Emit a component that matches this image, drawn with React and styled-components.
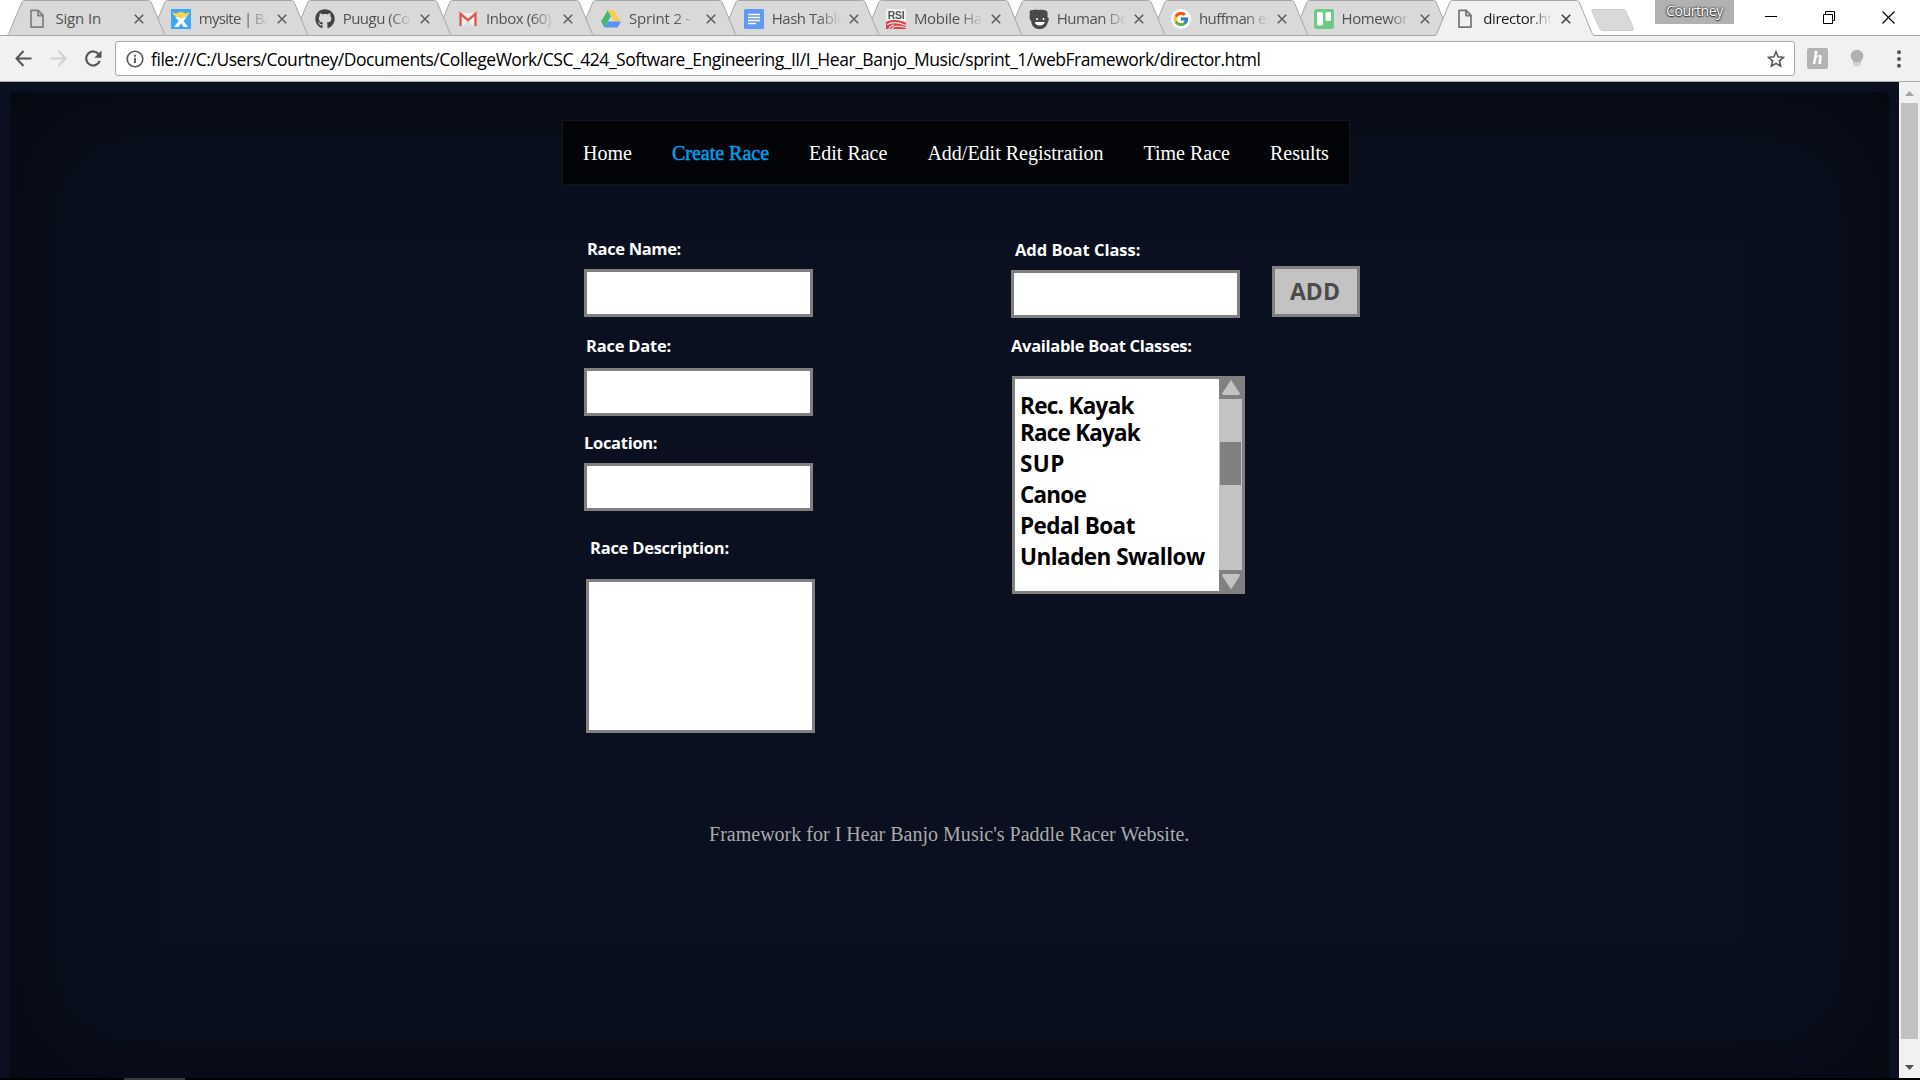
import React from 'react';
import styled, { createGlobalStyle, css } from 'styled-components';
import { FcGoogle } from 'react-icons/fc';
import { FaGithub } from 'react-icons/fa';

const ui = '"Open Sans", "Noto Sans", sans-serif';
const serif = '"Liberation Serif", "Times New Roman", serif';

const GlobalStyle = createGlobalStyle`
  *, *::before, *::after { box-sizing: border-box; }
  body { margin: 0; overflow: hidden; background: #fff; }
  svg { display: block; }
`;

const Screen = styled.div`
  display: flex;
  flex-direction: column;
  width: 1920px;
  height: 1080px;
  overflow: hidden;
  font-family: ${ui};
`;

/* ---------- tab strip ---------- */

const TabStrip = styled.header`
  display: flex;
  align-items: flex-start;
  flex: none;
  height: 36px;
  padding-left: 7px;
  background: linear-gradient(#a6a6a6, #a6a6a6) 0 35px / 100% 1px no-repeat #fff;
`;

const TabBox = styled.div`
  position: relative;
  z-index: ${(p) => p.$order};
  display: grid;
  flex: none;
  width: 159px;
  height: 36px;
  margin-right: -16.2px;
  > * { grid-area: 1 / 1; }
`;

const TabContent = styled.div`
  display: flex;
  align-items: center;
  position: relative;
  height: 36px;
  padding: 2px 0 0 ${(p) => 21 + p.$nudge}px;
`;

const Favicon = styled.span`
  display: flex;
  flex: none;
  width: 20px;
  height: 20px;
  opacity: ${(p) => (p.$active ? 1 : 0.9)};
`;

const TabTitle = styled.span`
  flex: none;
  width: 69px;
  margin: 0 ${(p) => 9.5 - p.$nudge}px 2px 8px;
  overflow: hidden;
  white-space: nowrap;
  font-size: 15px;
  line-height: 22px;
  letter-spacing: ${(p) => p.$track || -0.45}px;
  color: ${(p) => (p.$active ? '#1c1c1c' : '#515151')};
  ${(p) => !p.$short && css`mask-image: linear-gradient(90deg, #000 46px, transparent 69px);`}
`;

const NewTab = styled.svg`
  flex: none;
  margin: 9px 0 0 13px;
`;

const ProfileBadge = styled.span`
  flex: none;
  width: 79px;
  height: 24px;
  margin-left: 20px;
  background: #b1b1b1;
  color: #fff;
  font-size: 14px;
  line-height: 22px;
  letter-spacing: -0.4px;
  text-align: center;
  text-shadow: 0 0 2px #333, 0 0 2px #333, 0 1px 1px #444;
`;

const WindowButtons = styled.div`
  display: flex;
  gap: 46px;
  margin: 11px 0 0 31px;
`;

/* ---------- toolbar ---------- */

const Toolbar = styled.div`
  display: flex;
  align-items: center;
  flex: none;
  height: 46px;
  padding: 0 0 1px 15px;
  background: #f1f1f1;
  border-bottom: 1px solid #ababab;
`;

const NavIcons = styled.div`
  display: flex;
  align-items: center;
  gap: 17.5px;
  width: 100px;
  padding-top: 1px;
`;

const AddressBar = styled.div`
  display: flex;
  align-items: center;
  width: 1680px;
  height: 35px;
  padding: 0 9px 0 9.5px;
  background: #fff;
  border: 1px solid #a9a9a9;
  border-radius: 3px;
`;

const BarIcon = styled.svg`
  flex: none;
  margin-top: 1px;
`;

const Url = styled.span`
  flex: 1;
  margin: 1px 0 0 7.5px;
  font-size: 17.5px;
  line-height: 24px;
  letter-spacing: -0.458px;
  white-space: nowrap;
  color: #000;
`;

const Extensions = styled.div`
  display: flex;
  align-items: center;
  margin-left: 12px;
`;

const HoneyBadge = styled.span`
  width: 21px;
  height: 21px;
  border-radius: 2px;
  background: #b3b3b3;
  color: #fff;
  font: italic bold 18px/20px ${serif};
  text-align: center;
`;

const Bulb = styled.svg`
  margin: 0 33px 0 22px;
`;

/* ---------- page ---------- */

const Viewport = styled.div`
  display: flex;
  flex: none;
  height: 996px;
`;

const Page = styled.main`
  flex: 1;
  height: 996px;
  padding: 10px;
  overflow: hidden;
  background: #0a101f;
`;

const Panel = styled.div`
  display: flex;
  flex-direction: column;
  align-items: flex-start;
  height: 995px;
  padding: 28px 0 0 552px;
  box-shadow: inset 0 0 125px rgba(0, 0, 0, 0.56);
`;

const Menu = styled.nav`
  display: flex;
  width: 788px;
  height: 65px;
  background: #030408;
  border: 1px solid #161616;
`;

const MenuLink = styled.a`
  padding: 21px 20px 19px;
  font: 20px/23px ${serif};
  white-space: nowrap;
  color: ${(p) => (p.$active ? '#049fe8' : '#fff')};
  ${(p) => p.$active && css`-webkit-text-stroke: 0.5px #049fe8;`}
`;

const Form = styled.form`
  display: flex;
  align-items: flex-start;
  gap: 196px;
  margin: 54px 0 0 22px;
`;

const Column = styled.div`
  display: flex;
  flex-direction: column;
  align-items: flex-start;
  min-width: 231px;
`;

const Label = styled.label`
  height: 20px;
  margin: ${(p) => p.$above || 0}px 0 ${(p) => p.$below}px ${(p) => p.$indent || 0}px;
  font-size: 16.5px;
  font-weight: 700;
  line-height: 20px;
  letter-spacing: ${(p) => p.$track}px;
  white-space: nowrap;
  color: #fff;
`;

const field = css`
  display: block;
  width: 229px;
  margin: 0;
  padding: 0;
  border: 3px solid #808080;
  border-radius: 0;
  background: #fff;
  outline: 0;
`;

const TextField = styled.input`
  ${field}
  height: 48px;
`;

const TextArea = styled.textarea`
  ${field}
  height: 154px;
  margin-left: 2px;
  resize: none;
`;

const AddRow = styled.div`
  display: flex;
  align-items: flex-start;
  gap: 32px;
  height: 52px;
  ${TextField} { margin-top: 4px; }
`;

const AddButton = styled.button`
  width: 88px;
  height: 51px;
  padding: 0 2px 1px 0;
  border: 3px solid #808080;
  border-radius: 0;
  background: #c3c3c3;
  color: #4b4b4b;
  font: 700 23px/30px ${ui};
  letter-spacing: 0.1px;
`;

const ListBox = styled.div`
  display: flex;
  width: 233px;
  height: 218px;
  margin-left: 1px;
  border: 3px solid #808080;
  background: #fff;
`;

const Options = styled.ul`
  flex: 1;
  margin: 0;
  padding: 13px 0 0 5px;
  list-style: none;
`;

const Option = styled.li`
  height: ${(p) => p.$height || 31}px;
  font-size: 22.5px;
  font-weight: 700;
  line-height: ${(p) => p.$height || 31}px;
  letter-spacing: ${(p) => p.$track}px;
  white-space: nowrap;
  color: #000;
`;

const ListScroll = styled.div`
  display: flex;
  flex-direction: column;
  justify-content: space-between;
  width: 23px;
  background: #c3c3c3;
`;

const ListArrow = styled.span`
  display: flex;
  justify-content: center;
  height: ${(p) => (p.$down ? 21 : 20)}px;
  padding-top: ${(p) => (p.$down ? 4 : 1)}px;
  background: #808080;
`;

const ListThumb = styled.span`
  width: 21px;
  height: 43px;
  margin: 0 0 42px 1px;
  background: #808080;
`;

const Footer = styled.footer`
  margin: 90px 0 0 147px;
  font: 20px/23px ${serif};
  letter-spacing: 0.01px;
  white-space: nowrap;
  color: #aaa;
`;

const Scrollbar = styled.div`
  display: flex;
  flex-direction: column;
  align-items: center;
  width: 21px;
  padding: 9px 2px 0;
  background: #f1f1f1;
`;

const Thumb = styled.div`
  width: 17px;
  height: 936px;
  margin: 7px 0 26px;
  background: #c1c1c1;
`;

const Taskbar = styled.div`
  height: 2px;
  flex: none;
  padding-left: 124px;
  background: #000;
`;

const TaskIndicator = styled.div`
  width: 61px;
  height: 2px;
  background: #3a3a3a;
`;

/* ---------- drawings ---------- */

const FileIcon = () => (
  <svg width="20" height="20" viewBox="0 0 20 20" fill="none" stroke="#757575" strokeWidth="1.7" strokeLinejoin="round">
    <path d="M4 1.4h7.2l4.8 5v11.7H4z" /><path d="M11 1.5v5.2h5" />
  </svg>
);
const WixIcon = () => (
  <svg width="20" height="20" viewBox="0 0 20 20">
    <rect width="20" height="20" fill="#2ea3fb" />
    <path d="M3 18l4.6-6L4 7.5h4.2l2 2 2-2H16L12.600 12 17 18h-4.400L10 14.600 7.500 18z" fill="#fff" />
    <path d="M1.500 3l3.500 1.500L10 2.700l5 1.800L18.500 3c-.4 3-2.700 4.400-5.300 5.200C11 8.900 9 8.900 6.800 8.200 4.200 7.400 1.900 6 1.500 3z" fill="#fbd43c" />
  </svg>
);
const GmailIcon = () => (
  <svg width="20" height="20" viewBox="0 0 20 20">
    <path d="M1.500 4h17v13h-17z" fill="#f4f4f4" />
    <path d="M4 17l6-6 6 6z" fill="#e1e1e1" />
    <path d="M2.500 17V4.800L10 11.200l7.500-6.400V17" fill="none" stroke="#dd4b3e" strokeWidth="2.400" />
  </svg>
);
const DriveIcon = () => (
  <svg width="20" height="20" viewBox="0 0 20 20">
    <path d="M6.700 1.200L0 12.600 3.400 18.500 10 7z" fill="#35b567" />
    <path d="M6.700 1.200h6.600L20 12.600h-6.600z" fill="#fccd48" />
    <path d="M6.800 12.600H20l-3.400 5.900H3.400z" fill="#4c8bf5" />
  </svg>
);
const DocsIcon = () => (
  <svg width="20" height="20" viewBox="0 0 20 20">
    <rect width="20" height="20" rx="1.500" fill="#5592f7" />
    <path d="M4 5.500h12M4 8.500h12M4 11.500h12M4 14.500h8" stroke="#fff" strokeWidth="1.500" />
  </svg>
);
const RsiIcon = () => (
  <svg width="20" height="20" viewBox="0 0 20 20">
    <rect width="20" height="20" fill="#f5f5f5" />
    <text x="10" y="9.600" textAnchor="middle" fontFamily="Liberation Sans, sans-serif" fontWeight="700" fontSize="10.500" letterSpacing="-.4" fill="#4a4a4a">RSI</text>
    <path d="M0 13c5-3 13-2.500 20 .5V20H0z" fill="#d8343c" />
    <path d="M1 15.500c6-3 13-2 19 1M6 20c1-3.500 6-3.500 14-1.500M3 20c.5-2 2-3.500 5-4" stroke="#f5e8e8" strokeWidth="1.100" fill="none" />
  </svg>
);
const HumanIcon = () => (
  <svg width="20" height="20" viewBox="0 0 20 20">
    <path d="M1 5C-.5 2 2 .5 4 1.300 6-.3 8 .6 9.500 1c3-.6 6-.2 8.500 1 .8 2 .7 4 .4 6C20 9 20.300 11 19 12.500 18 17.500 15 20 10.500 20S2.600 17.500 2.200 12C0 10.500.500 7 1 5z" fill="#3c3a38" />
    <circle cx="8" cy="10" r="1" fill="#fff" /><circle cx="14.500" cy="10" r="1" fill="#fff" />
    <path d="M5.800 13h10c-.6 2.600-2.600 3.500-5 3.500S6.300 15.600 5.800 13z" fill="#fff" />
  </svg>
);
const GoogleIcon = () => (
  <svg width="20" height="20" viewBox="0 0 20 20">
    <circle cx="10" cy="10" r="10" fill="#fff" />
    <FcGoogle x="1.500" y="1.500" width="17" height="17" size={17} />
  </svg>
);
const TrelloIcon = () => (
  <svg width="20" height="20" viewBox="0 0 20 20">
    <rect width="20" height="20" rx="2.500" fill="#61c97c" />
    <rect x="3" y="3" width="6" height="13.500" rx="1.500" fill="#fff" />
    <rect x="11.500" y="3" width="5.500" height="9" rx="1.500" fill="#fff" />
  </svg>
);

const tabs = [
  { title: 'Sign In', icon: <FileIcon />, short: true, track: -0.15, nudge: -0.6 },
  { title: 'mysite | BA', icon: <WixIcon />, track: -0.7 },
  { title: 'Puugu (Co', icon: <FaGithub size={20} color="#333" />, nudge: 1, track: -0.5 },
  { title: 'Inbox (60)', icon: <GmailIcon />, nudge: 1.6 },
  { title: 'Sprint 2 - ', icon: <DriveIcon />, track: -0.2, nudge: 1.8 },
  { title: 'Hash Table', icon: <DocsIcon />, nudge: 1.6 },
  { title: 'Mobile Ha', icon: <RsiIcon />, track: -0.3, nudge: 1 },
  { title: 'Human De', icon: <HumanIcon />, nudge: 1 },
  { title: 'huffman e', icon: <GoogleIcon />, track: -0.6, nudge: 0.5 },
  { title: 'Homewor', icon: <TrelloIcon />, nudge: 0.3 },
  { title: 'director.ht', icon: <FileIcon />, active: true, nudge: -0.8 },
];

function Tab({ title, icon, short, active, track, order, nudge = 0 }) {
  return (
    <TabBox $order={order}>
      <svg width="159" height="36" viewBox="0 0 159 36">
        <path
          d="M0 35.500C1.500 34.500 2 33 2.500 32L14.500 3C15.300 1.200 16 .5 17.500.5h124c1.500 0 2.200.700 3 2.500l12 29c.5 1 1 2.500 2.500 3.500z"
          fill={active ? '#f1f1f1' : '#d9d9d9'}
          stroke="#a6a6a6"
        />
        {active && <path d="M1 35.500h157" stroke="#f1f1f1" />}
      </svg>
      <TabContent $nudge={nudge}>
        <Favicon $active={active}>{icon}</Favicon>
        <TabTitle $active={active} $short={short} $track={track} $nudge={active ? nudge + 1.5 : nudge}>{title}</TabTitle>
        <svg width="10" height="10" viewBox="0 0 10 10" stroke={active ? '#444' : '#5f5f5f'} strokeWidth="1.600">
          <path d="M.8.800l8.400 8.400M9.200.800L.8 9.200" />
        </svg>
      </TabContent>
    </TabBox>
  );
}

const options = [
  { name: 'Rec. Kayak', height: 27, track: -0.7 },
  { name: 'Race Kayak', height: 27, track: -0.8 },
  { name: 'SUP', height: 35, track: 0.4 },
  { name: 'Canoe', height: 27, track: -0.8 },
  { name: 'Pedal Boat', height: 35, track: -0.55 },
  { name: 'Unladen Swallow', height: 27, track: -0.53 },
];

const links = ['Home', 'Create Race', 'Edit Race', 'Add/Edit Registration', 'Time Race', 'Results'];

export default function App() {
  return (
    <Screen>
      <GlobalStyle />
      <TabStrip>
        {tabs.map((t, i) => <Tab key={t.title} {...t} order={t.active ? 20 : 15 - i} />)}
        <NewTab width="44" height="22" viewBox="0 0 44 22">
          <path d="M2 .5h30c1.500 0 2.500.500 3 2l7.500 17c.5 1.200 0 2-1.500 2H12c-1.800 0-2.600-.6-3.200-2L1 2.500C.5 1.300.700.500 2 .5z" fill="#d9d9d9" stroke="#cbcbcb" />
        </NewTab>
        <ProfileBadge>Courtney</ProfileBadge>
        <WindowButtons>
          <svg width="12" height="12" viewBox="0 0 12 12"><path d="M0 5.500h12" stroke="#000" /></svg>
          <svg width="13" height="13" viewBox="0 0 13 13" fill="none" stroke="#000"><path d="M.5 3.500h9v9h-9zM2.500 3.500v-3h9v9h-2" /></svg>
          <svg width="13" height="13" viewBox="0 0 13 13" stroke="#000" strokeWidth="1.100"><path d="M.5.500l12 12M12.500.500l-12 12" /></svg>
        </WindowButtons>
      </TabStrip>

      <Toolbar>
        <NavIcons>
          <svg width="17" height="17" viewBox="0 0 17 17" fill="none" stroke="#555" strokeWidth="2"><path d="M8.500 1L1.500 8.500l7 7.500M1.500 8.500H16.500" /></svg>
          <svg width="17" height="17" viewBox="0 0 17 17" fill="none" stroke="#d0d0d0" strokeWidth="2"><path d="M8.500 1l7 7.500-7 7.500M15.500 8.500H.5" /></svg>
          <svg width="18" height="18" viewBox="0 0 18 18"><path d="M14.800 4.300A7 7 0 1 0 15.700 11" fill="none" stroke="#555" strokeWidth="2.200" /><path d="M17.500.500v7.200h-7.200z" fill="#555" /></svg>
        </NavIcons>
        <AddressBar>
          <BarIcon width="18" height="18" viewBox="0 0 18 18"><circle cx="9" cy="9" r="7.800" fill="none" stroke="#555" strokeWidth="1.600" /><path d="M9 8v5M9 4.800v1.900" stroke="#555" strokeWidth="1.900" /></BarIcon>
          <Url>file:///C:/Users/Courtney/Documents/CollegeWork/CSC_424_Software_Engineering_II/I_Hear_Banjo_Music/sprint_1/webFramework/director.html</Url>
          <BarIcon width="18" height="18" viewBox="0 0 18 18"><path d="M9 1.800l2.100 5 5.400.5-4.100 3.600 1.200 5.300L9 13.400l-4.600 2.800 1.200-5.300L1.500 7.300l5.400-.5z" fill="none" stroke="#555" strokeWidth="1.600" /></BarIcon>
        </AddressBar>
        <Extensions>
          <HoneyBadge>h</HoneyBadge>
          <Bulb width="14" height="18" viewBox="0 0 14 18">
            <rect x="3" y="9" width="8" height="8.500" rx="4" fill="#d2d2d2" />
            <circle cx="7" cy="7" r="6.300" fill="#b0b0b0" />
          </Bulb>
          <BarIcon as="svg" width="4" height="18" viewBox="0 0 4 18" fill="#555"><circle cx="2" cy="2.200" r="2" /><circle cx="2" cy="9" r="2" /><circle cx="2" cy="15.800" r="2" /></BarIcon>
        </Extensions>
      </Toolbar>

      <Viewport>
        <Page>
          <Panel>
            <Menu>
              {links.map((l) => <MenuLink key={l} $active={l === 'Create Race'}>{l}</MenuLink>)}
            </Menu>
            <Form>
              <Column>
                <Label $indent={3} $below={10} $track={-0.35}>Race Name:</Label>
                <TextField />
                <Label $indent={2} $above={19} $below={12} $track={-0.22}>Race Date:</Label>
                <TextField />
                <Label $above={17} $below={10} $track={-0.3}>Location:</Label>
                <TextField />
                <Label $indent={6} $above={27} $below={21} $track={-0.24}>Race Description:</Label>
                <TextArea />
              </Column>
              <Column>
                <Label $indent={4} $above={1} $below={6} $track={-0.04}>Add Boat Class:</Label>
                <AddRow>
                  <TextField />
                  <AddButton type="button">ADD</AddButton>
                </AddRow>
                <Label $above={18} $below={20} $track={-0.3}>Available Boat Classes:</Label>
                <ListBox>
                  <Options>
                    {options.map((o) => <Option key={o.name} $height={o.height} $track={o.track}>{o.name}</Option>)}
                  </Options>
                  <ListScroll>
                    <ListArrow><svg width="18" height="16" viewBox="0 0 18 16"><path d="M9 0l9 13.500-1 1.500H1L0 13.500z" fill="#c3c3c3" /></svg></ListArrow>
                    <ListThumb />
                    <ListArrow $down><svg width="18" height="16" viewBox="0 0 18 16"><path d="M9 15.500l9-14L17 0H1L0 1.500z" fill="#c3c3c3" /></svg></ListArrow>
                  </ListScroll>
                </ListBox>
              </Column>
            </Form>
            <Footer>Framework for I Hear Banjo Music's Paddle Racer Website.</Footer>
          </Panel>
        </Page>
        <Scrollbar>
          <svg width="9" height="5" viewBox="0 0 9 5"><path d="M0 5L4.500 0 9 5z" fill="#a3a3a3" /></svg>
          <Thumb />
          <svg width="9" height="5" viewBox="0 0 9 5"><path d="M0 0l4.500 5L9 0z" fill="#505050" /></svg>
        </Scrollbar>
      </Viewport>
      <Taskbar><TaskIndicator /></Taskbar>
    </Screen>
  );
}
